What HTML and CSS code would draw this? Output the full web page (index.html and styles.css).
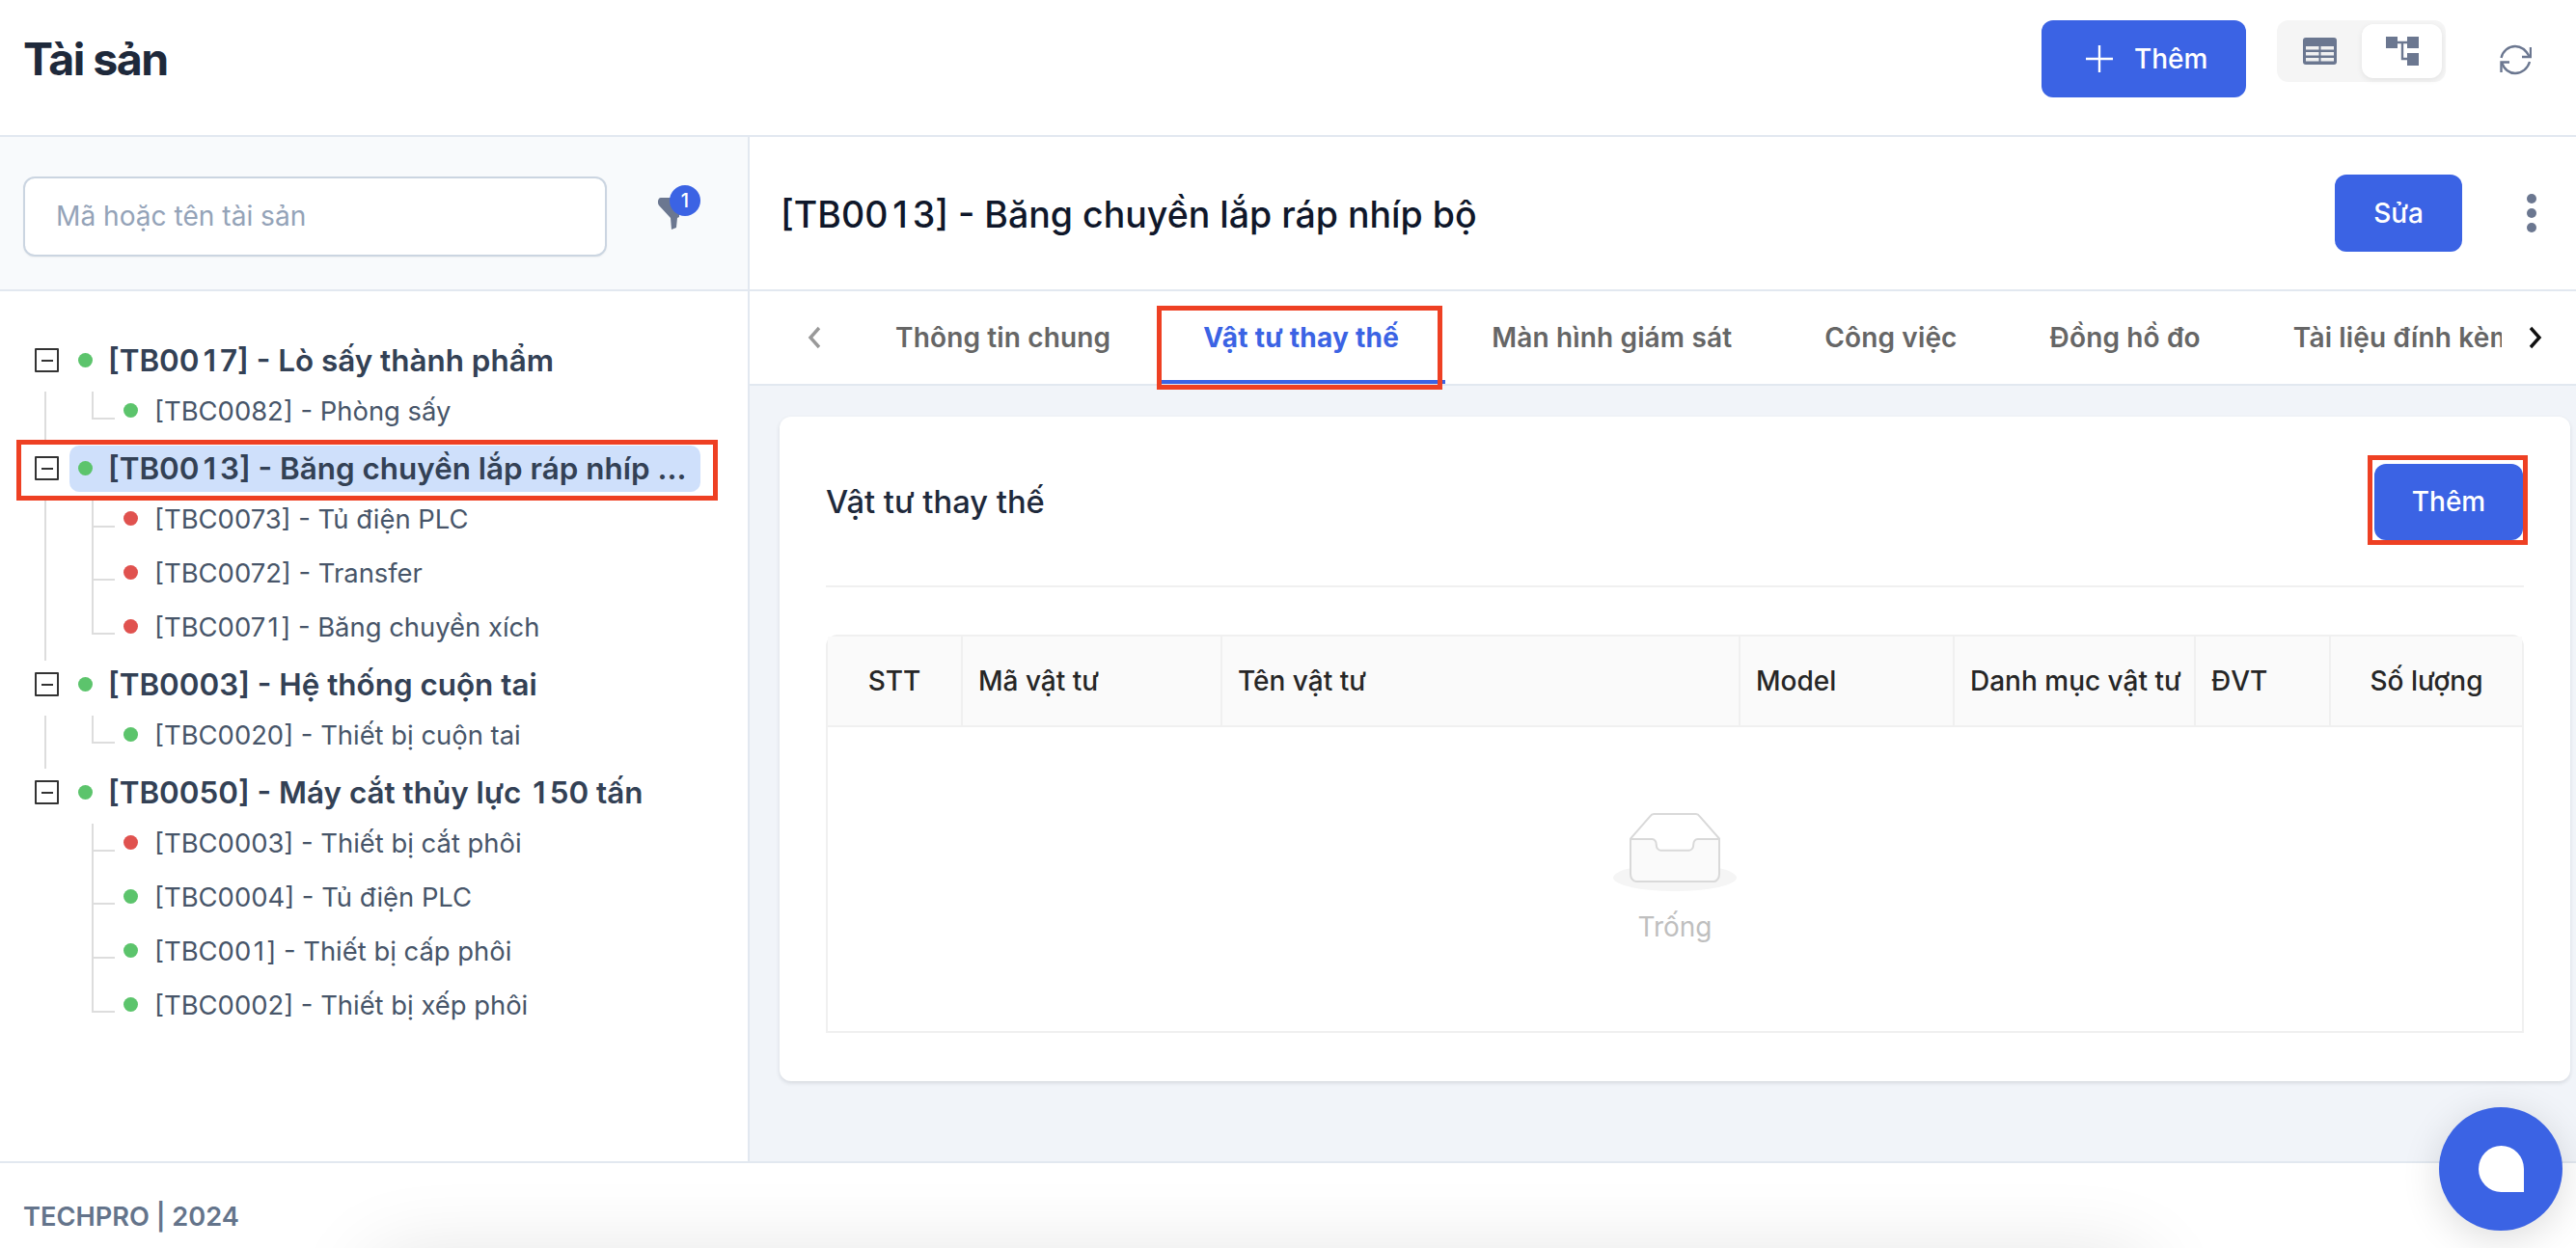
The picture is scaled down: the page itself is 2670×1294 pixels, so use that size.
FILE: index.html
```html
<!DOCTYPE html>
<html lang="vi">
<head>
<meta charset="utf-8">
<title>Tài sản</title>
<link rel="stylesheet" href="styles.css">
</head>
<body>
<div class="app">

  <header class="topbar">
    <h1 class="page-title">Tài sản</h1>
    <div class="top-actions">
      <button class="btn btn-add">
        <svg class="plus" viewBox="0 0 28 28"><path d="M14 0v28M0 14h28" stroke="#fff" stroke-width="2.4" fill="none" stroke-linecap="round"/></svg>
        Thêm
      </button>
      <div class="view-toggle">
        <div class="view-opt">
          <svg width="35" height="28" viewBox="0 0 35 28">
            <rect width="35" height="28" rx="3" fill="#6b7790"/>
            <path d="M3 9h13.5v3.5H3zM18.5 9H32v3.5H18.5zM3 15h13.5v3.5H3zM18.5 15H32v3.5H18.5zM3 21h13.5v3.5H3zM18.5 21H32v3.5H18.5z" fill="#f1f1f1"/>
          </svg>
        </div>
        <div class="view-opt view-opt-active">
          <svg width="34" height="30" viewBox="0 0 34 30">
            <path d="M0 0h12v12H0zM22 0h12v12H22zM22 17h12v13H22z" fill="#6b7790"/>
            <path d="M12 6h10M17 6v17h5" stroke="#6b7790" stroke-width="2.4" fill="none"/>
          </svg>
        </div>
      </div>
      <svg class="refresh" width="33" height="32" viewBox="0 0 33 32" fill="none" stroke="#6b7790" stroke-width="2.4">
        <path d="M1.5 14C3 7 9 2 16 2c6.500 0 11 3.500 15 11"/>
        <path d="M32 3v10H23"/>
        <path d="M31 18c-2 7-8 12-15 12-6.500 0-11-3.500-14-11"/>
        <path d="M1.500 29V18.500H10"/>
      </svg>
    </div>
  </header>

  <main class="body">
    <aside class="sidebar">
      <div class="search-bar">
        <div class="search-input">Mã hoặc tên tài sản</div>
        <div class="filter">
          <svg width="22" height="33" viewBox="0 0 22 33"><path d="M3 0h19v20l-2 1-1 10-5 2-1-12L1 8C-1 5 0 0 3 0z" fill="#6b7790"/></svg>
          <span class="badge">1</span>
        </div>
      </div>

      <div class="tree">
        <div class="node">
          <div class="parent">
            <span class="toggle"></span>
            <div class="parent-label"><span class="dot green"></span><span class="parent-name">[TB00<span class="d1">1</span>7] - Lò sấy thành phẩm</span></div>
          </div>
          <div class="children has-next">
            <div class="leaf"><span class="dot green"></span><span>[TBC0082] - Phòng sấy</span></div>
          </div>
        </div>

        <div class="node">
          <div class="parent">
            <span class="toggle"></span>
            <div class="parent-label selected"><span class="dot green"></span><span class="parent-name">[TB00<span class="d1">1</span>3] - Băng chuyền lắp ráp nhíp ...</span></div>
          </div>
          <div class="children has-next">
            <div class="leaf"><span class="dot red"></span><span>[TBC0073] - Tủ điện PLC</span></div>
            <div class="leaf"><span class="dot red"></span><span>[TBC0072] - Transfer</span></div>
            <div class="leaf"><span class="dot red"></span><span>[TBC007<span class="d1">1</span>] - Băng chuyền xích</span></div>
          </div>
        </div>

        <div class="node">
          <div class="parent">
            <span class="toggle"></span>
            <div class="parent-label"><span class="dot green"></span><span class="parent-name">[TB0003] - Hệ thống cuộn tai</span></div>
          </div>
          <div class="children has-next">
            <div class="leaf"><span class="dot green"></span><span>[TBC0020] - Thiết bị cuộn tai</span></div>
          </div>
        </div>

        <div class="node">
          <div class="parent">
            <span class="toggle"></span>
            <div class="parent-label"><span class="dot green"></span><span class="parent-name">[TB0050] - Máy cắt thủy lực <span class="d1">1</span>50 tấn</span></div>
          </div>
          <div class="children">
            <div class="leaf"><span class="dot red"></span><span>[TBC0003] - Thiết bị cắt phôi</span></div>
            <div class="leaf"><span class="dot green"></span><span>[TBC0004] - Tủ điện PLC</span></div>
            <div class="leaf"><span class="dot green"></span><span>[TBC00<span class="d1">1</span>] - Thiết bị cấp phôi</span></div>
            <div class="leaf"><span class="dot green"></span><span>[TBC0002] - Thiết bị xếp phôi</span></div>
          </div>
        </div>
      </div>
    </aside>

    <section class="detail">
      <div class="detail-head">
        <h2 class="detail-title">[TB00<span class="d1">1</span>3] - Băng chuyền lắp ráp nhíp bộ</h2>
        <button class="btn btn-edit">Sửa</button>
        <div class="more"><i></i><i></i><i></i></div>
      </div>

      <nav class="tabs">
        <div class="tab-arrow tab-prev">
          <svg width="14" height="24" viewBox="0 0 14 24"><path d="M12 2 3 12l9 10" fill="none" stroke="#999" stroke-width="3.4"/></svg>
        </div>
        <div class="tab-list">
          <a class="tab">Thông tin chung</a>
          <a class="tab tab-active">Vật tư thay thế</a>
          <a class="tab">Màn hình giám sát</a>
          <a class="tab">Công việc</a>
          <a class="tab">Đồng hồ đo</a>
          <a class="tab">Tài liệu đính kèm</a>
        </div>
        <div class="tab-arrow tab-next">
          <svg width="14" height="24" viewBox="0 0 14 24"><path d="M2 2l9 10-9 10" fill="none" stroke="#111" stroke-width="3.4"/></svg>
        </div>
      </nav>

      <div class="content">
        <div class="card">
          <div class="card-head">
            <h3 class="card-title">Vật tư thay thế</h3>
            <button class="btn btn-small">Thêm</button>
          </div>

          <div class="table-wrap">
            <table class="table">
              <thead>
                <tr>
                  <th class="col-stt">STT</th>
                  <th class="col-code">Mã vật tư</th>
                  <th class="col-name">Tên vật tư</th>
                  <th class="col-model">Model</th>
                  <th class="col-cat">Danh mục vật tư</th>
                  <th class="col-unit">ĐVT</th>
                  <th class="col-qty">Số lượng</th>
                </tr>
              </thead>
              <tbody>
                <tr>
                  <td colspan="7" class="empty">
                    <svg class="empty-img" width="128" height="82" viewBox="0 0 64 41">
                      <g transform="translate(0 1)" fill="none" fill-rule="evenodd">
                        <ellipse fill="#f5f5f5" cx="32" cy="33" rx="32" ry="7"/>
                        <g fill-rule="nonzero" stroke="#d9d9d9">
                          <path d="M55 12.760 44.854 1.258C44.367.474 43.656 0 42.907 0H21.093c-.749 0-1.460.474-1.947 1.257L9 12.761V22h46v-9.240z"/>
                          <path d="M41.613 15.931c0-1.605.994-2.930 2.227-2.931H55v18.137C55 33.260 53.680 35 52.050 35h-40.100C10.320 35 9 33.259 9 31.137V13h11.160c1.233 0 2.227 1.323 2.227 2.928v.022c0 1.605 1.005 2.901 2.237 2.901h14.752c1.232 0 2.237-1.308 2.237-2.913v-.007z" fill="#fafafa"/>
                        </g>
                      </g>
                    </svg>
                    <div class="empty-text">Trống</div>
                  </td>
                </tr>
              </tbody>
            </table>
          </div>
        </div>
      </div>
    </section>
  </main>

  <footer class="footer">TECHPRO | 2024</footer>

  <div class="footer-glow"></div>
  <div class="chat"><span class="chat-bubble"></span></div>

  <div class="mark mark-tree"></div>
  <div class="mark mark-tab"></div>
  <div class="mark mark-add"></div>
</div>
</body>
</html>
```

FILE: styles.css
```css
* {
  box-sizing: border-box;
}
html, body {
  margin: 0;
  height: 100%;
}
body {
  font-family: Inter, "Noto Sans", sans-serif;
  color: #334155;
  background: #fff;
}
h1, h2, h3 {
  margin: 0;
}
/* the digit 1 sits wider in the original font */
.d1 {
  margin: 0 .09em;
}
.parent-name .d1,
.detail-title .d1 {
  margin: 0 .13em;
}

.app {
  position: relative;
  display: flex;
  flex-direction: column;
  height: 100vh;
  overflow: hidden;
}

/* top bar */
.topbar {
  flex: none;
  height: 142px;
  display: flex;
  align-items: flex-start;
  justify-content: space-between;
  padding: 21px 46px 0 24px;
  border-bottom: 2px solid #e2e8f0;
}
.page-title {
  margin-top: 13px;
  font-size: 46.5px;
  line-height: 54px;
  font-weight: 700;
  letter-spacing: -1.5px;
  color: #1e293b;
}
.top-actions {
  display: flex;
  align-items: flex-start;
}
.btn {
  border: 0;
  background: #3b63e4;
  color: #fff;
  font-family: inherit;
  font-size: 28px;
  font-weight: 500;
  border-radius: 12px;
}
.btn-add {
  width: 212px;
  height: 80px;
  display: flex;
  align-items: center;
  padding: 0 0 0 46px;
  gap: 22px;
}
.plus {
  width: 28px;
  height: 28px;
}
.view-toggle {
  display: flex;
  align-items: center;
  width: 175px;
  height: 64px;
  margin-left: 32px;
  padding: 0 4px 0 0;
  background: #f5f5f5;
  border-radius: 12px;
}
.view-opt {
  width: 88px;
  height: 56px;
  display: flex;
  align-items: center;
  justify-content: center;
}
.view-opt-active {
  width: 83px;
  background: #fff;
  border-radius: 12px;
  box-shadow: 0 2px 6px rgba(0, 0, 0, .08);
}
.refresh {
  margin: 25px 0 0 56px;
}

/* main */
.body {
  flex: 1;
  display: flex;
  min-height: 0;
}
.sidebar {
  flex: none;
  width: 777px;
  border-right: 2px solid #e2e8f0;
}
.search-bar {
  height: 160px;
  display: flex;
  align-items: center;
  padding: 6px 0 0 24px;
  background: #f8fafc;
  border-bottom: 2px solid #e2e8f0;
}
.search-input {
  width: 605px;
  height: 83px;
  display: flex;
  align-items: center;
  padding-left: 32px;
  font-size: 28.1px;
  color: #94a3b8;
  background: #fff;
  border: 2px solid #cbd5e1;
  border-radius: 12px;
  box-shadow: 0 1px 2px rgba(0, 0, 0, .05);
}
.filter {
  position: relative;
  margin-left: 53px;
  width: 22px;
  height: 33px;
  margin-top: -6px;
}
.badge {
  position: absolute;
  left: 12px;
  top: -13px;
  width: 32px;
  height: 32px;
  display: flex;
  align-items: center;
  justify-content: center;
  border-radius: 50%;
  background: #3b63e4;
  color: #fff;
  font-size: 20px;
  font-weight: 500;
}

/* tree */
.tree {
  padding: 48px 0 0 36px;
}
.node {
  position: relative;
  padding-bottom: 8.5px;
}
.parent {
  display: flex;
  align-items: center;
  height: 47.5px;
}
.toggle {
  flex: none;
  width: 25px;
  height: 25px;
  display: flex;
  align-items: center;
  justify-content: center;
  border: 2px solid #333;
  border-radius: 1px;
}
.toggle::after {
  content: "";
  width: 12px;
  height: 2px;
  background: #333;
}
.parent-label {
  flex: none;
  display: flex;
  align-items: center;
  width: 654px;
  height: 48px;
  margin-left: 11px;
  padding-left: 9px;
  gap: 16px;
  border-radius: 10px;
  white-space: nowrap;
}
.parent-label.selected {
  background: #cfe0fb;
}
.parent-name {
  padding-top: 1px;
  font-size: 31.4px;
  font-weight: 600;
  color: #334155;
}
.dot {
  flex: none;
  width: 15px;
  height: 15px;
  border-radius: 50%;
}
.green {
  background: #5cc46c;
}
.red {
  background: #e0524f;
}
.children {
  position: relative;
  padding-left: 92px;
}
.children.has-next::before {
  content: "";
  position: absolute;
  left: 10px;
  top: 8px;
  bottom: -7px;
  border-left: 2px solid #ddd;
}
.leaf {
  position: relative;
  height: 56px;
  display: flex;
  align-items: center;
  gap: 17px;
  font-size: 27.4px;
  color: #475569;
  white-space: nowrap;
}
.leaf::before {
  content: "";
  position: absolute;
  left: -33px;
  top: -22px;
  width: 22px;
  height: 56px;
  border-left: 2px solid #ddd;
  border-bottom: 2px solid #ddd;
}
.leaf:first-child::before {
  top: 8px;
  height: 27px;
}

/* detail */
.detail {
  flex: 1;
  min-width: 0;
  display: flex;
  flex-direction: column;
}
.detail-head {
  flex: none;
  height: 160px;
  display: flex;
  align-items: center;
  padding: 0 41px 0 32px;
  border-bottom: 2px solid #e2e8f0;
}
.detail-title {
  flex: 1;
  padding-top: 3px;
  font-size: 37.5px;
  font-weight: 500;
  color: #0f172a;
}
.btn-edit {
  width: 132px;
  height: 80px;
}
.more {
  display: flex;
  flex-direction: column;
  gap: 5px;
  margin-left: 67px;
}
.more i {
  width: 10px;
  height: 10px;
  border-radius: 50%;
  background: #6b7790;
}

.tabs {
  flex: none;
  height: 98px;
  display: flex;
  border-bottom: 2px solid #e2e8f0;
}
.tab-arrow {
  display: flex;
  align-items: center;
}
.tab-prev {
  width: 103px;
  padding-left: 60px;
}
.tab-next {
  flex: 1;
  padding-left: 28px;
}
.tab-list {
  width: 1713px;
  display: flex;
  overflow: hidden;
}
.tab {
  flex: none;
  display: flex;
  align-items: center;
  height: 96px;
  padding: 0 48px;
  font-size: 28px;
  font-weight: 600;
  letter-spacing: .15px;
  color: #666;
}
.tab-active {
  color: #3b63e4;
  font-weight: 700;
  letter-spacing: .25px;
  box-shadow: inset 0 -4px 0 #3b63e4;
}

.content {
  flex: 1;
  padding: 32px 6px 0 31px;
  background: #f1f4f9;
}
.card {
  height: 689px;
  padding: 0 48px;
  background: #fff;
  border-radius: 12px;
  box-shadow: 0 2px 4px rgba(15, 23, 42, .12);
}
.card-head {
  display: flex;
  align-items: center;
  justify-content: space-between;
  height: 177px;
  border-bottom: 2px solid #f0f0f0;
}
.card-title {
  font-size: 32.7px;
  font-weight: 500;
  color: #1e293b;
}
.btn-small {
  width: 154px;
  height: 79px;
  margin: 1px 1px 0 0;
}

.table-wrap {
  margin-top: 49px;
  border: 2px solid #f0f0f0;
  border-radius: 12px 12px 0 0;
}
.table {
  width: 100%;
  table-layout: fixed;
  border-collapse: collapse;
}
.table th {
  height: 93px;
  padding: 0 0 0 16px;
  text-align: left;
  font-size: 28px;
  font-weight: 500;
  color: #262626;
  background: #fafafa;
  border-right: 2px solid #f0f0f0;
  border-bottom: 2px solid #f0f0f0;
  white-space: nowrap;
}
.table th:last-child {
  border-right: 0;
}
.table .col-stt,
.table .col-qty {
  padding: 0;
  text-align: center;
}
.col-stt { width: 139px; }
.col-code { width: 269px; }
.col-name { width: 537px; }
.col-model { width: 222px; }
.col-cat { width: 250px; }
.col-unit { width: 140px; }

.empty {
  height: 316px;
  padding: 0;
  text-align: center;
  vertical-align: top;
}
.empty-img {
  display: block;
  margin: 88px auto 0;
}
.empty-text {
  margin-top: 15px;
  font-size: 28px;
  line-height: 44px;
  color: #bfbfbf;
}

/* footer */
.footer {
  flex: none;
  height: 90px;
  padding: 36px 0 0 24px;
  font-size: 27.2px;
  line-height: 40px;
  font-weight: 600;
  color: #64748b;
  border-top: 2px solid #e2e8f0;
}
.footer-glow {
  position: absolute;
  left: 410px;
  width: 1790px;
  top: 1330px;
  height: 40px;
  box-shadow: 0 0 90px 20px rgba(0, 0, 0, .14);
}

.chat {
  position: absolute;
  left: 2528px;
  top: 1148px;
  width: 128px;
  height: 128px;
  display: flex;
  align-items: center;
  justify-content: center;
  border-radius: 50%;
  background: #3b63e4;
  box-shadow: 0 8px 40px rgba(0, 0, 0, .14);
}
.chat-bubble {
  width: 47px;
  height: 48px;
  background: #fff;
  border-radius: 50% 50% 0 50%;
}

/* red marks drawn over the screenshot */
.mark {
  position: absolute;
  border: 5px solid #ee4023;
}
.mark-tree {
  left: 17px;
  top: 456px;
  width: 727px;
  height: 63px;
}
.mark-tab {
  left: 1199px;
  top: 317px;
  width: 296px;
  height: 87px;
}
.mark-add {
  left: 2454px;
  top: 472px;
  width: 166px;
  height: 93px;
}
```
